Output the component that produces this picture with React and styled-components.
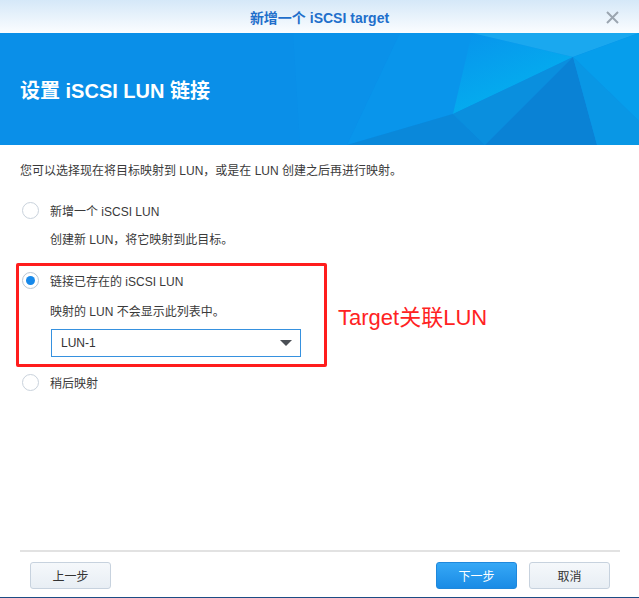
import styled, { createGlobalStyle } from "styled-components";

const GlobalStyle = createGlobalStyle`
  html, body {
    margin: 0;
    padding: 0;
    background: #ffffff;
    overflow: hidden;
  }
  body {
    font-family: "Liberation Sans", "Noto Sans CJK SC", sans-serif;
    font-size: 12px;
    color: #3a3a3a;
  }
`;

const Window = styled.div`
  width: 639px;
  height: 598px;
  display: flex;
  flex-direction: column;
  box-sizing: border-box;
  border-bottom: 1px solid #1d4c84;
  background: #ffffff;
`;

const TitleBar = styled.div`
  position: relative;
  height: 33px;
  flex: none;
  display: flex;
  align-items: center;
  justify-content: center;
  background: linear-gradient(to bottom, #d5e8f8 0%, #fbfdff 100%);
`;

const Title = styled.div`
  font-size: 14px;
  font-weight: bold;
  color: #1f6fcb;
`;

const CloseButton = styled.button`
  position: absolute;
  right: 20px;
  top: 11px;
  width: 13px;
  height: 13px;
  padding: 0;
  border: none;
  background: none;
  display: flex;
`;

const Banner = styled.div`
  position: relative;
  height: 112px;
  flex: none;
  background: #0a8fe8;
  display: flex;
  align-items: center;
  padding-left: 20px;
  overflow: hidden;
`;

const BannerArt = styled.svg`
  position: absolute;
  left: 0;
  top: 0;
`;

const BannerTitle = styled.h1`
  position: relative;
  margin: 0;
  font-size: 20px;
  font-weight: bold;
  color: #ffffff;
`;

const Body = styled.div`
  flex: 1;
  padding: 17px 20px 0 20px;
`;

const Intro = styled.div`
  line-height: 18px;
  margin-bottom: 20px;
`;

const OptionRow = styled.label`
  display: flex;
  align-items: center;
  height: 20px;
  gap: 11px;
  margin-top: ${(p) => p.$top || 0}px;
  padding-left: 2px;
`;

const Radio = styled.span`
  box-sizing: border-box;
  width: 17px;
  height: 17px;
  border-radius: 50%;
  border: 1px solid ${(p) => (p.$checked ? "#b9c6d3" : "#c9d2dc")};
  background: #ffffff;
  display: flex;
  align-items: center;
  justify-content: center;
  &::after {
    content: "";
    width: 9px;
    height: 9px;
    border-radius: 50%;
    background: ${(p) => (p.$checked ? "#1789ea" : "transparent")};
  }
`;

const Desc = styled.div`
  line-height: 18px;
  padding-left: 30px;
  margin-top: ${(p) => p.$top}px;
`;

const HighlightRow = styled.div`
  display: flex;
  align-items: center;
  gap: 11px;
  margin: 14px 0 0 -4px;
`;

const Highlight = styled.div`
  width: 304px;
  border: 3px solid #ff1d1d;
  border-radius: 2px;
  padding: 4px 0 7px 1px;
`;

const Note = styled.div`
  font-family: "Liberation Sans", "Noto Sans CJK SC", sans-serif;
  font-size: 22px;
  color: #ff2222;
`;

const Select = styled.div`
  box-sizing: border-box;
  width: 250px;
  height: 28px;
  margin: 8px 0 0 31px;
  border: 1px solid #3691df;
  display: flex;
  align-items: center;
  justify-content: space-between;
  padding: 0 8px 0 9px;
  color: #333;
`;

const Caret = styled.span`
  width: 0;
  height: 0;
  border-left: 6px solid transparent;
  border-right: 6px solid transparent;
  border-top: 6px solid #4b4f55;
`;

const Footer = styled.div`
  flex: none;
  margin: 0 19px 0 20px;
  border-top: 2px solid #e2e2e2;
  padding: 10px 10px 8px 10px;
  display: flex;
  gap: 12px;
`;

const Button = styled.button`
  box-sizing: border-box;
  width: 81px;
  height: 27px;
  border-radius: 3px;
  font-family: "Liberation Sans", "Noto Sans CJK SC", sans-serif;
  font-size: 12px;
  border: 1px solid ${(p) => (p.$primary ? "#1f88dc" : "#c7d2de")};
  background: ${(p) =>
    p.$primary
      ? "linear-gradient(to bottom, #36a8f6, #1a8be5)"
      : "linear-gradient(to bottom, #f5f8fb, #e8eef4)"};
  color: ${(p) => (p.$primary ? "#ffffff" : "#333333")};
  margin-left: ${(p) => (p.$push ? "auto" : "0")};
`;

const App = () => {
  return (
    <>
      <GlobalStyle />
      <Window>
        <TitleBar>
          <Title>新增一个 iSCSI target</Title>
          <CloseButton aria-label="close">
            <svg width="13" height="13" viewBox="0 0 13 13">
              <path d="M1 1 L12 12 M12 1 L1 12" stroke="#9ba5b0" strokeWidth="2" />
            </svg>
          </CloseButton>
        </TitleBar>

        <Banner>
          <BannerArt width="639" height="112" viewBox="0 33 639 112">
            <defs>
              <linearGradient id="glow" x1="0" y1="0" x2="0.6" y2="1">
                <stop offset="0" stopColor="#0893ec" />
                <stop offset="1" stopColor="#03b3ef" />
              </linearGradient>
            </defs>
            <polygon points="293,33 400,33 347,145 300,145" fill="#0b93ea" opacity="0.4" />
            <polygon points="400,33 472,33 573,57 453,114 347,145" fill="#0995eb" />
            <polygon points="472,33 573,57 453,114" fill="url(#glow)" />
            <polygon points="472,33 639,33 573,57" fill="#1aa8ef" />
            <polygon points="573,57 639,33 639,121" fill="#069eec" />
            <polygon points="347,145 453,114 485,145" fill="#0a88da" />
            <polygon points="453,114 573,57 485,145" fill="#0a8fde" />
            <polygon points="573,57 597,145 485,145" fill="#0a82d5" />
            <polygon points="573,57 639,121 639,145 597,145" fill="#0997e5" />
          </BannerArt>
          <BannerTitle>设置 iSCSI LUN 链接</BannerTitle>
        </Banner>

        <Body>
          <Intro>您可以选择现在将目标映射到 LUN，或是在 LUN 创建之后再进行映射。</Intro>

          <OptionRow>
            <Radio />
            新增一个 iSCSI LUN
          </OptionRow>
          <Desc $top={11}>创建新 LUN，将它映射到此目标。</Desc>

          <HighlightRow>
            <Highlight>
              <OptionRow>
                <Radio $checked />
                链接已存在的 iSCSI LUN
              </OptionRow>
              <Desc $top={13}>映射的 LUN 不会显示此列表中。</Desc>
              <Select>
                LUN-1
                <Caret />
              </Select>
            </Highlight>
            <Note>Target关联LUN</Note>
          </HighlightRow>

          <OptionRow $top={5}>
            <Radio />
            稍后映射
          </OptionRow>
        </Body>

        <Footer>
          <Button>上一步</Button>
          <Button $primary $push>
            下一步
          </Button>
          <Button>取消</Button>
        </Footer>
      </Window>
    </>
  );
};

export default App;
